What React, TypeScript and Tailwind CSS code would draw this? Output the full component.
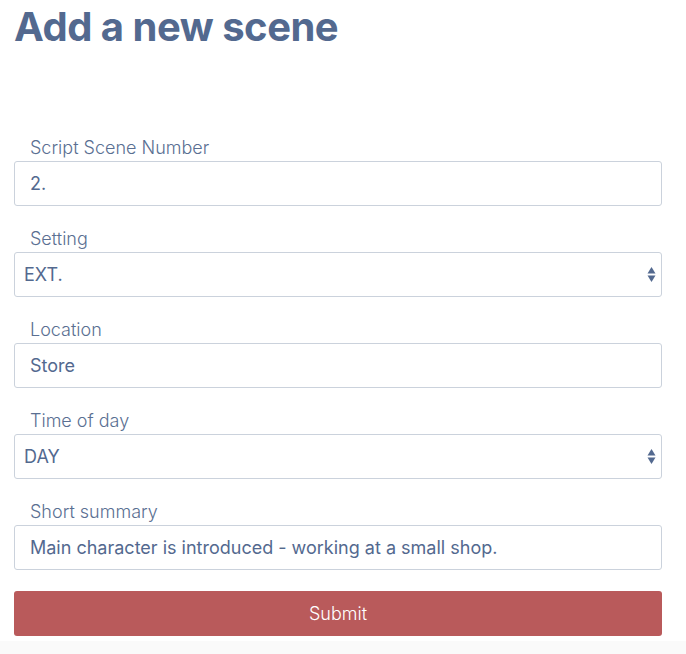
import React from "react";

const fieldFont = { fontFamily: "Inter, 'Liberation Sans', sans-serif" };

function Label({ children }: { children: React.ReactNode }) {
  return (
    <label className="block pl-4 text-[18px] leading-6 font-light text-[#5a6f92] mb-px">
      {children}
    </label>
  );
}

function TextInput({ value }: { value: string }) {
  return (
    <div className="h-[45px] w-full rounded-[3px] border border-[#cbd2dc] bg-white flex items-center pl-[15px] text-[18px] text-[#53698f]">
      {value}
    </div>
  );
}

function SelectBox({ value }: { value: string }) {
  return (
    <div className="h-[45px] w-full rounded-[3px] border border-[#cbd2dc] bg-white flex items-center justify-between pl-[9px] pr-[5px] text-[18px] text-[#53698f]">
      <span>{value}</span>
      <svg width="9" height="17" viewBox="0 0 9 17" className="text-[#53698f]">
        <path d="M4.5 1 L8.5 7.5 L0.5 7.5 Z" fill="currentColor" />
        <path d="M0.5 9.5 L8.5 9.5 L4.5 16 Z" fill="currentColor" />
      </svg>
    </div>
  );
}

export default function App() {
  return (
    <div className="w-[686px] min-h-[654px] bg-white flex flex-col" style={fieldFont}>
      <div className="pl-[14px] pr-[24px]">
        <h1
          className="text-[40px] leading-[48px] font-bold tracking-[-0.5px] text-[#53698f] pt-[3px]"
          style={{ fontFamily: "Inter, 'Liberation Sans', sans-serif" }}
        >
          Add a new scene
        </h1>
        <form className="flex flex-col gap-[21px] mt-[85px]">
          <div>
            <Label>Script Scene Number</Label>
            <TextInput value="2." />
          </div>
          <div>
            <Label>Setting</Label>
            <SelectBox value="EXT." />
          </div>
          <div>
            <Label>Location</Label>
            <TextInput value="Store" />
          </div>
          <div>
            <Label>Time of day</Label>
            <SelectBox value="DAY" />
          </div>
          <div>
            <Label>Short summary</Label>
            <TextInput value="Main character is introduced - working at a small shop." />
          </div>
        </form>
        <button className="mt-[21px] h-[45px] w-full rounded-[3px] bg-[#b95a5b] text-white text-[18px] font-light flex items-center justify-center">
          Submit
        </button>
      </div>
      <div className="mt-[5px] flex-1 bg-[#fafafa]" />
    </div>
  );
}
